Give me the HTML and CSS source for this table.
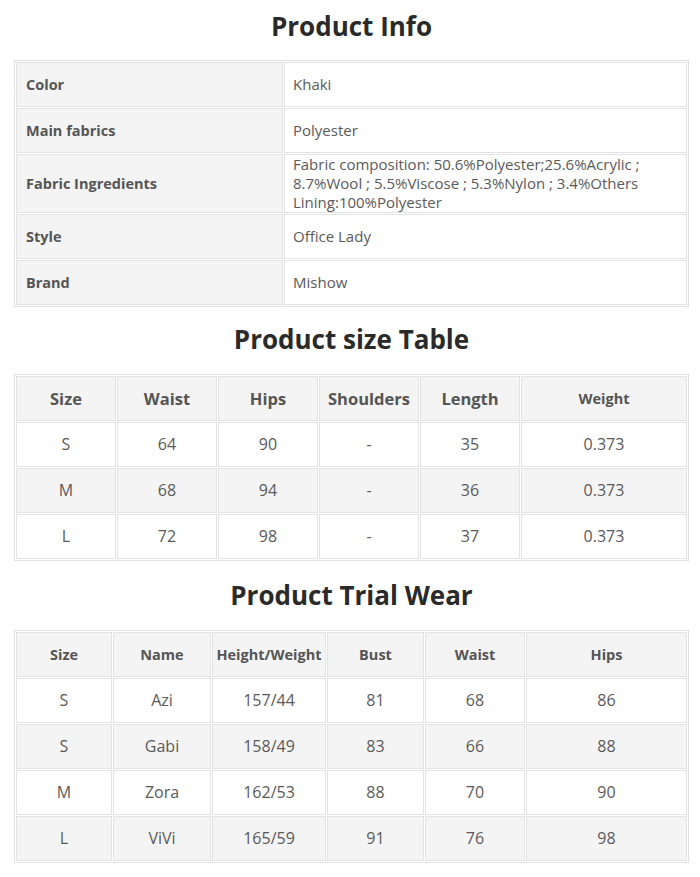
FILE: index.html
```html
<!DOCTYPE html>
<html>
<head>
<meta charset="utf-8">
<link rel="stylesheet" href="styles.css">
</head>
<body>
<div class="page">
  <h2 class="title">Product Info</h2>
  <table class="tbl info">
    <colgroup><col class="c-label"><col></colgroup>
    <tr><th>Color</th><td>Khaki</td></tr>
    <tr><th>Main fabrics</th><td>Polyester</td></tr>
    <tr class="tall"><th>Fabric Ingredients</th><td>Fabric composition: 50.6%Polyester;25.6%Acrylic ;<br>8.7%Wool ; 5.5%Viscose ; 5.3%Nylon ; 3.4%Others<br>Lining:100%Polyester</td></tr>
    <tr><th>Style</th><td>Office Lady</td></tr>
    <tr><th>Brand</th><td>Mishow</td></tr>
  </table>

  <h2 class="title t2">Product size Table</h2>
  <table class="tbl grid size">
    <colgroup><col class="w100"><col class="w100"><col class="w100"><col class="w100"><col class="w100"><col></colgroup>
    <tr class="head big"><th>Size</th><th>Waist</th><th>Hips</th><th>Shoulders</th><th>Length</th><th class="small">Weight</th></tr>
    <tr><td>S</td><td>64</td><td>90</td><td>-</td><td>35</td><td>0.373</td></tr>
    <tr class="alt"><td>M</td><td>68</td><td>94</td><td>-</td><td>36</td><td>0.373</td></tr>
    <tr><td>L</td><td>72</td><td>98</td><td>-</td><td>37</td><td>0.373</td></tr>
  </table>

  <h2 class="title t3">Product Trial Wear</h2>
  <table class="tbl grid trial">
    <colgroup><col class="w96"><col class="w98"><col class="w114"><col class="w97"><col class="w100"><col></colgroup>
    <tr class="head"><th>Size</th><th>Name</th><th>Height/Weight</th><th>Bust</th><th>Waist</th><th>Hips</th></tr>
    <tr><td>S</td><td>Azi</td><td>157/44</td><td>81</td><td>68</td><td>86</td></tr>
    <tr class="alt"><td>S</td><td>Gabi</td><td>158/49</td><td>83</td><td>66</td><td>88</td></tr>
    <tr><td>M</td><td>Zora</td><td>162/53</td><td>88</td><td>70</td><td>90</td></tr>
    <tr class="alt"><td>L</td><td>ViVi</td><td>165/59</td><td>91</td><td>76</td><td>98</td></tr>
  </table>
</div>
</body>
</html>
```
FILE: styles.css
```css
html, body {
  margin: 0;
  padding: 0;
  background: #fff;
}
body {
  font-family: "Open Sans", "Noto Sans", sans-serif;
  color: #555;
}
.page {
  padding: 8px 11px 0 14px;
}
.title {
  margin: 0;
  height: 52px;
  line-height: 36px;
  text-align: center;
  font-size: 26px;
  font-weight: 700;
  color: #2a2a2a;
}
.t2 { margin-top: 14px; height: 53px; line-height: 36px; }
.t3 { margin-top: 16px; height: 53px; line-height: 36px; }

.tbl {
  width: 675px;
  border: 1px solid #e0e0e0;
  border-collapse: separate;
  border-spacing: 1px;
  table-layout: fixed;
  background: #fff;
}
.tbl th, .tbl td {
  border: 1px solid #e3e3e3;
  height: 45px;
  padding: 0 9px;
  font-size: 14.5px;
  line-height: 19px;
  box-sizing: border-box;
}
.info th {
  background: #f4f4f4;
  text-align: left;
  font-weight: 700;
  color: #555;
}
.info td {
  background: #fff;
  color: #5a5a5a;
  font-size: 15px;
  padding-left: 8px;
}
.c-label { width: 267px; }
.info .tall th, .info .tall td { height: 59px; }

.grid td, .grid th {
  text-align: center;
  padding: 0 2px;
}
.grid td { font-size: 16px; color: #5a5a5a; }
.grid .head th {
  background: #f4f4f4;
  font-weight: 700;
  color: #555;
  font-size: 14.5px;
}
.grid .head.big th { font-size: 16.5px; }
.grid .head.big th.small { font-size: 14.5px; }
.grid .alt td { background: #f4f4f4; }

.w100 { width: 100px; }
.w96 { width: 96px; }
.w97 { width: 97px; }
.w98 { width: 98px; }
.w114 { width: 114px; }
```
